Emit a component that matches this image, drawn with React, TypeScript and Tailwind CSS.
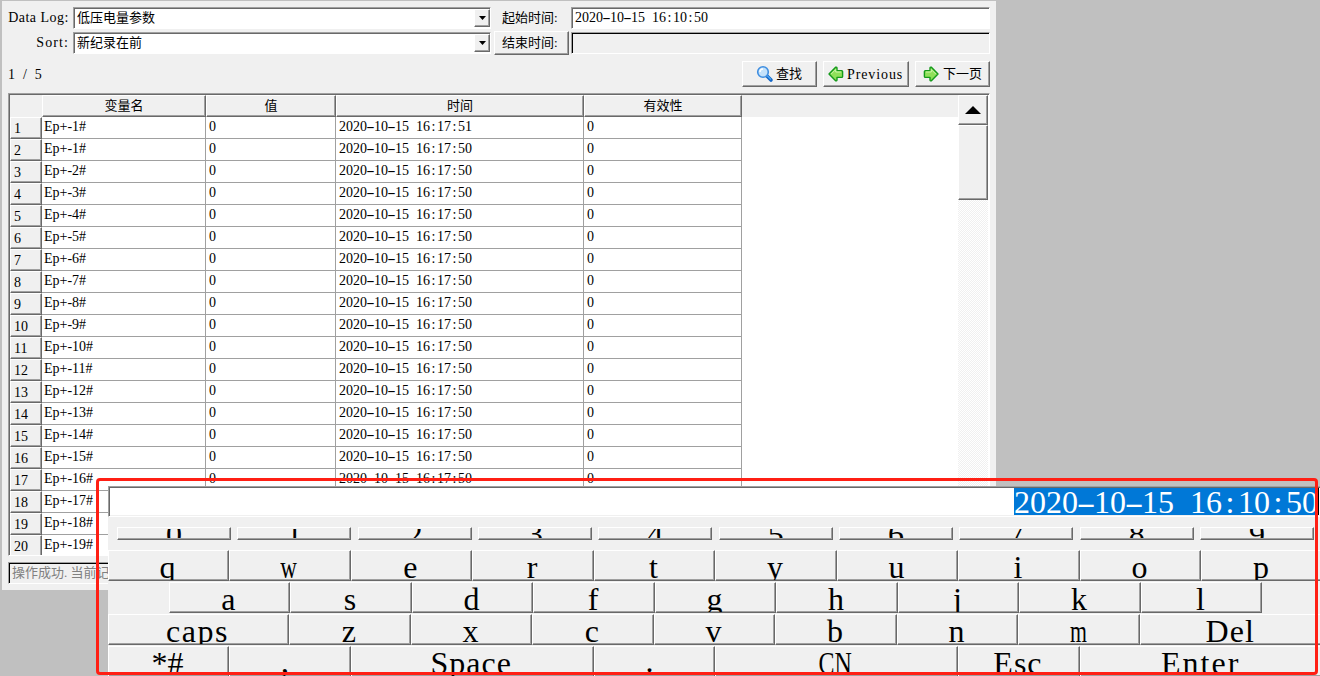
import React from "react";
import clsx from "clsx";

const raised =
	"border border-t-white border-l-white border-r-[#696969] border-b-[#696969] bg-[#f0f0f0] shadow-[inset_-1px_-1px_0_#a0a0a0]";
const sunken =
	"border border-t-[#a0a0a0] border-l-[#a0a0a0] border-r-white border-b-white shadow-[inset_1px_1px_0_#696969]";

// Rows behind the on-screen keyboard only carry their name
const rows = Array.from({ length: 20 }, (_, i) => ({
	name: `Ep+-${i === 0 ? 1 : i}#`,
	value: i < 17 ? "0" : "",
	time: i === 0 ? "2020-10-15 16:17:51" : i < 17 ? "2020-10-15 16:17:50" : "",
	valid: i < 17 ? "0" : "",
}));

const keyRows = [
	{
		offset: "",
		keys: ["q", "w", "e", "r", "t", "y", "u", "i", "o", "p"],
	},
	{
		offset: "ml-[61px]",
		keys: ["a", "s", "d", "f", "g", "h", "j", "k", "l"],
	},
	{
		offset: "",
		keys: ["caps", "z", "x", "c", "v", "b", "n", "m", "Del"],
	},
	{
		offset: "",
		keys: ["*#", ",", "Space", ".", "CN", "Esc", "Enter"],
	},
];

const keyWidths: Record<string, string> = {
	caps: "w-[181.5px]",
	Del: "w-[183px]",
	Space: "w-[243px]",
	CN: "w-[243px]",
	Enter: "w-[244px]",
};

const keyLabels: Record<string, string> = {
	w: "scale-x-[0.72]",
	m: "scale-x-[0.68]",
	CN: "scale-x-75",
	",": "pr-2 leading-[28px]",
	".": "pr-2 leading-[28px]",
	caps: "tracking-[1.5px]",
	Del: "tracking-[1px]",
	Space: "tracking-[1px]",
	Esc: "tracking-[1px]",
	Enter: "tracking-[2px]",
};

// Digits are half an em wide, punctuation is padded to the same pitch
const Timestamp = ({ value }: { value: string }) => (
	<span className="inline-flex whitespace-pre">
		{value.split(/([-: ])/).map((part, i) =>
			/^[-: ]$/.test(part) ? (
				<span
					key={i}
					className={clsx(
						"inline-block w-[0.5em] text-center",
						part === "-" && "scale-x-[1.8]"
					)}
				>
					{part}
				</span>
			) : (
				<span key={i}>{part}</span>
			)
		)}
	</span>
);

const Select = ({ value }: { value: string }) => (
	<div className={clsx(sunken, "flex h-[22px] w-[418px] bg-white py-px pl-px")}>
		<span className="flex-1 pl-0.5 text-[13px] leading-[18px]">
			{value}
		</span>
		<span
			className={clsx(raised, "flex w-4 items-center justify-center")}
		>
			<svg width="7" height="4" viewBox="0 0 7 4">
				<path d="M0 0h7L3.5 4z" />
			</svg>
		</span>
	</div>
);

const SearchIcon = () => (
	<svg width="18" height="18" viewBox="0 0 18 18">
		<path
			d="M10.5 10.5l4.5 4.5"
			stroke="#1467c8"
			strokeWidth="3.6"
			strokeLinecap="round"
		/>
		<path d="M11 10.5l4 4" stroke="#4da3f0" strokeWidth="1.5" />
		<circle
			cx="7"
			cy="7"
			r="5.3"
			fill="#c4e2fb"
			stroke="#3f8ee0"
			strokeWidth="1.6"
		/>
		<path d="M4 7a3 3 0 013-3" fill="none" stroke="#fff" strokeWidth="1.5" />
	</svg>
);

const ArrowIcon = ({ flip }: { flip?: boolean }) => (
	<svg
		width="16"
		height="16"
		viewBox="0 0 16 16"
		className={flip ? "-scale-x-100" : ""}
	>
		<path
			d="M1 8L7.6 1.2Q9 .8 9 2.2V4.6h4.6q1 0 1 1v4.8q0 1-1 1H9v2.4q0 1.4-1.4 1z"
			fill="#8fe05a"
			stroke="#159a1b"
			strokeWidth="1.4"
			strokeLinejoin="round"
		/>
		<path d="M3.2 8L7.7 3.5V6h5.4" fill="none" stroke="#cdf5a8" />
	</svg>
);

const HeaderCell = ({
	className,
	children,
}: {
	className: string;
	children?: React.ReactNode;
}) => (
	<div
		className={clsx(
			raised,
			"flex h-[22px] items-center justify-center text-[13px]",
			className
		)}
	>
		{children}
	</div>
);

const Cell = ({
	className,
	children,
}: {
	className: string;
	children: React.ReactNode;
}) => (
	<div
		className={clsx(
			"h-[22px] border-r border-b border-[#a0a0a0] leading-[20px]",
			className
		)}
	>
		{children}
	</div>
);

const LogTable = () => (
	<div
		className={clsx(
			sunken,
			"mt-1.5 ml-1.5 flex h-[463px] w-[982px] overflow-hidden bg-white pt-px pr-px pl-px"
		)}
	>
		<div className="flex-1">
			<div className="flex bg-[#f0f0f0]">
				<div className="w-8" />
				<HeaderCell className="w-[164px]">变量名</HeaderCell>
				<HeaderCell className="w-[130px]">值</HeaderCell>
				<HeaderCell className="w-[248px]">时间</HeaderCell>
				<HeaderCell className="w-[158px]">有效性</HeaderCell>
			</div>
			{rows.map((row, i) => (
				<div key={i} className="flex">
					<div
						className={clsx(
							raised,
							"h-[22px] w-8 pl-[3px] leading-[21px]"
						)}
					>
						{i + 1}
					</div>
					<Cell className="w-[164px] pl-0.5">{row.name}</Cell>
					<Cell className="w-[130px] pl-[3px]">{row.value}</Cell>
					<Cell className="w-[248px] pl-[3px]">
						<Timestamp value={row.time} />
					</Cell>
					<Cell className="w-[158px] pl-[3px]">{row.valid}</Cell>
				</div>
			))}
		</div>
		<div className="w-[30px] bg-[conic-gradient(#fff_25%,#f0f0f0_0_50%,#fff_0_75%,#f0f0f0_0)] bg-[length:2px_2px]">
			<div
				className={clsx(
					raised,
					"flex h-[30px] items-center justify-center"
				)}
			>
				<svg width="16" height="8" viewBox="0 0 16 8">
					<path d="M0 8h16L8 0z" />
				</svg>
			</div>
			<div className={clsx(raised, "h-[75px]")} />
		</div>
	</div>
);

const Keyboard = () => (
	<div className="absolute top-[486px] left-[108px] h-[190px] w-[1212px] overflow-hidden bg-[#f0f0f0] text-[32px]">
		<div className="flex h-[31px] w-[1215px] justify-end border-t border-l border-b border-t-[#a0a0a0] border-l-[#a0a0a0] border-b-white bg-white pr-1 shadow-[inset_1px_1px_0_#696969,inset_0_-1px_0_#f0f0f0]">
			<div className="mt-px h-[27px] border-r border-black bg-[#0078d7] leading-[28px] text-white">
				<Timestamp value="2020-10-15 16:10:50" />
			</div>
		</div>
		<div className="mt-[10px] ml-[9px] flex w-[1197px] gap-[6.33px]">
			{["0", "1", "2", "3", "4", "5", "6", "7", "8", "9"].map((key) => (
				<div key={key} className={clsx(raised, "h-[13px] flex-1 p-px")}>
					<div className="flex h-[9px] items-center justify-center overflow-hidden">
						<span className="leading-[32px]">{key}</span>
					</div>
				</div>
			))}
		</div>
		<div className="mt-[10px] -ml-[0.3px] flex w-[1216px] flex-col gap-px">
			{keyRows.map((row, i) => (
				<div key={i} className={clsx("flex", row.offset)}>
					{row.keys.map((key) => (
						<div
							key={key}
							className={clsx(
								raised,
								"flex h-[31px] shrink-0 justify-center overflow-hidden pr-0.5 leading-[32px]",
								keyWidths[key] ?? "w-[121.5px]"
							)}
						>
							<span className={keyLabels[key]}>{key}</span>
						</div>
					))}
				</div>
			))}
		</div>
	</div>
);

const App = () => {
	return (
		<div className="relative h-[676px] w-[1320px] overflow-hidden bg-[#c0c0c0] pt-px pl-0.5 font-['Liberation_Serif','Noto_Sans_CJK_SC',serif] text-[14px] text-black">
			<div className="h-[589px] w-[994px] bg-[#f0f0f0] pt-1.5">
				<div className="flex">
					<div className="flex w-[67px] flex-col gap-[3px] text-right leading-[22px] whitespace-nowrap">
						<span className="tracking-[0.5px]">Data Log:</span>
						<span className="tracking-[1.1px]">Sort:</span>
					</div>
					<div className="ml-1 flex flex-col gap-[3px]">
						<Select value="低压电量参数" />
						<Select value="新纪录在前" />
					</div>
					<div className="ml-[3px] w-[75px] text-[13px]">
						<div className="h-6 pl-2 leading-[22px]">起始时间:</div>
						<div className={clsx(raised, "h-6 pl-[7px] leading-[22px]")}>
							结束时间:
						</div>
					</div>
					<div className="ml-0.5 flex flex-col gap-[3px]">
						<div
							className={clsx(
								sunken,
								"h-[22px] w-[419px] bg-white pl-[3px] leading-[20px]"
							)}
						>
							<Timestamp value="2020-10-15 16:10:50" />
						</div>
						<div className="h-[22px] w-[419px] border border-t-[#a0a0a0] border-r-white border-b-white border-l-[#a0a0a0] shadow-[inset_1px_1px_0_#000]" />
					</div>
				</div>
				<div className="mt-1.5 flex h-[26px] items-center">
					<span className="ml-1.5 flex-1 tracking-[2.2px]">1 / 5</span>
					<div className="flex gap-1.5 pr-1.5">
						<div
							className={clsx(
								raised,
								"flex h-[26px] w-[75px] items-center pl-[13px] text-[13px]"
							)}
						>
							<SearchIcon />
							<span className="ml-0.5">查找</span>
						</div>
						<div
							className={clsx(
								raised,
								"flex h-[26px] w-[86px] items-center pl-1"
							)}
						>
							<ArrowIcon />
							<span className="ml-[3px] tracking-[0.9px]">Previous</span>
						</div>
						<div
							className={clsx(
								raised,
								"flex h-[26px] w-[75px] items-center pl-[7px] text-[13px]"
							)}
						>
							<ArrowIcon flip />
							<span className="ml-[4px]">下一页</span>
						</div>
					</div>
				</div>
				<LogTable />
				<div className="mt-1.5 ml-1.5 h-[22px] w-[982px] border border-t-[#a0a0a0] border-r-white border-b-white border-l-[#a0a0a0] pl-[3px] text-[13px] leading-[20px] whitespace-pre text-[#808080] shadow-[inset_1px_1px_0_#000]">
					操作成功. 当前记录
				</div>
			</div>
			<Keyboard />
			<div className="absolute top-[478px] left-[96px] h-[197px] w-[1222px] rounded-[4px] border-3 border-[#ff1f14]" />
		</div>
	);
};

export default App;
